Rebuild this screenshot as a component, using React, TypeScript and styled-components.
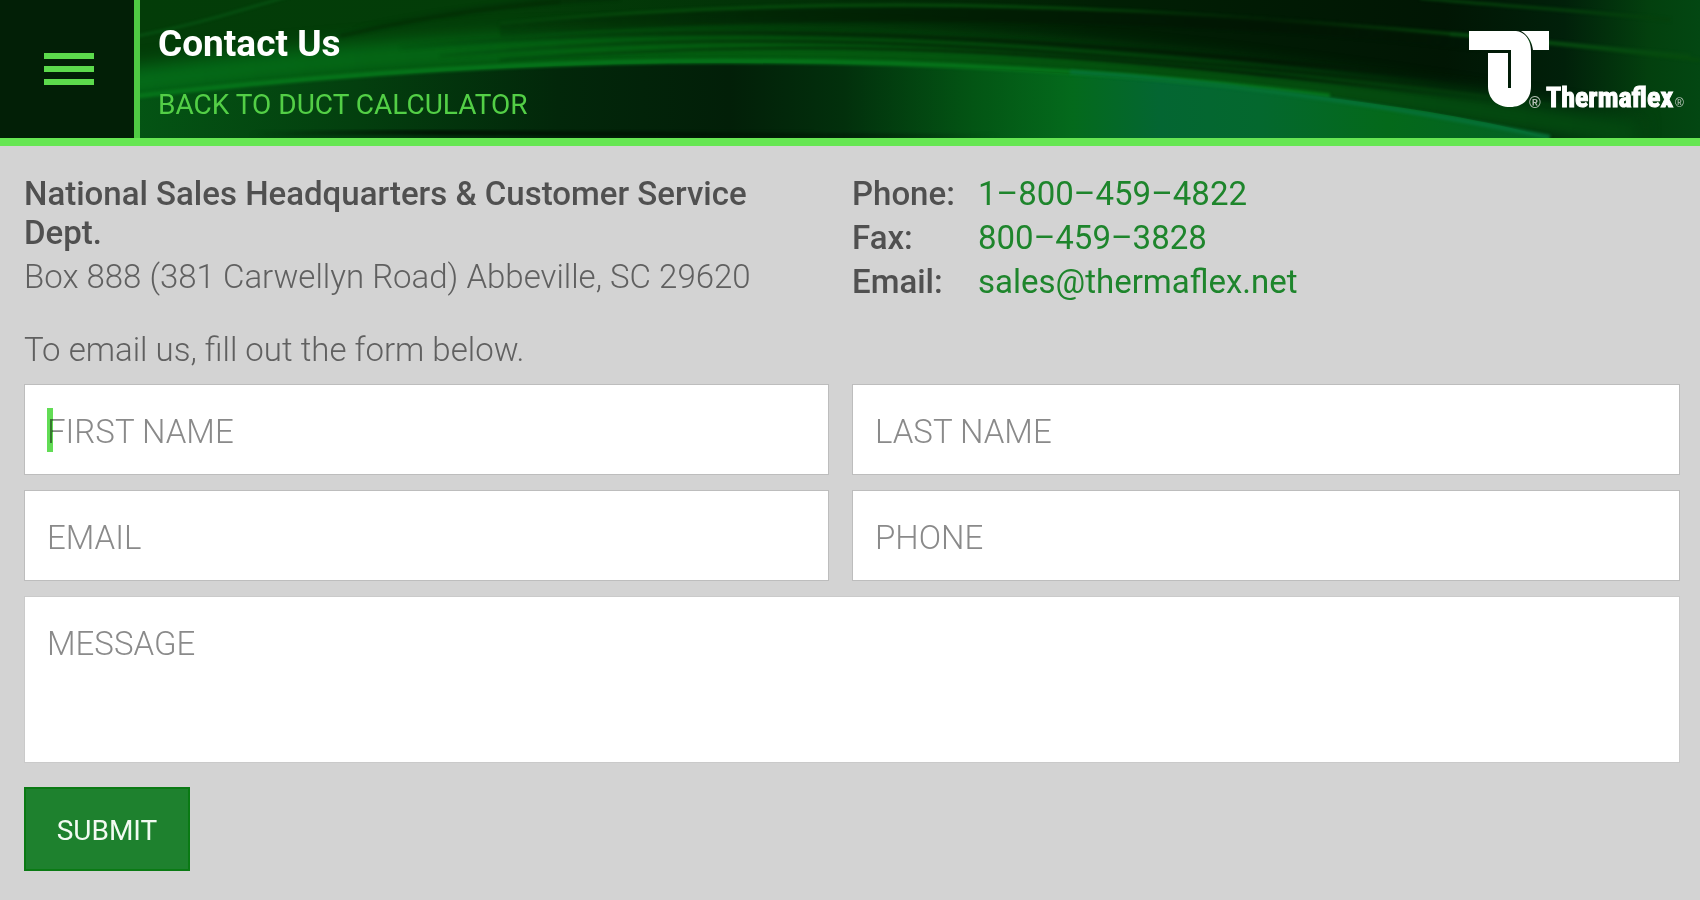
import React from 'react';
import styled, { createGlobalStyle } from 'styled-components';

const GlobalStyle = createGlobalStyle`
  * { box-sizing: border-box; }
  body {
    margin: 0;
    min-height: 100vh;
    background: #d3d3d3;
    color: #606060;
    font-family: Roboto, 'Liberation Sans', sans-serif;
    font-size: 33px;
    font-weight: 350;
    line-height: 39px;
  }
`;

const Header = styled.header`
  position: relative;
  display: flex;
  height: 146px;
  background: #022c08;
  border-bottom: 8px solid #66e652;
`;

const Backdrop = styled.svg`
  position: absolute;
  inset: 0;
  width: 100%;
  height: 100%;
`;

const MenuButton = styled.button`
  position: relative;
  width: 140px;
  padding: 0 0 0 44px;
  display: flex;
  flex-direction: column;
  justify-content: center;
  gap: 7px;
  background: #021f06;
  border: 0;
  border-right: 6px solid #4fcb43;
`;

const MenuBar = styled.span`
  width: 50px;
  height: 6px;
  background: #5cdb4c;
`;

const Heading = styled.div`
  position: relative;
  flex: 1;
  padding: 24px 0 0 18px;
`;

const Title = styled.h1`
  margin: 0 0 22px;
  color: #fff;
  font-size: 37px;
  font-weight: 700;
  line-height: 40px;
`;

const BackLink = styled.a`
  display: block;
  color: #53cf46;
  font-size: 28px;
  font-weight: 400;
  line-height: 38px;
  text-decoration: none;
`;

const Logo = styled.svg`
  position: relative;
  width: 220px;
  height: 84px;
  margin: 28px 12px 0 0;
  overflow: visible;
`;

const Main = styled.main`
  padding: 28px 20px 0 24px;
`;

const Columns = styled.div`
  display: grid;
  grid-template-columns: 1fr 1fr;
  row-gap: 15px;
`;

const Cell = styled.div<{ $left?: boolean }>`
  position: relative;
  padding-right: ${(p) => (p.$left ? '23px' : '0')};
`;

const Office = styled.h2`
  margin: 0 0 5px;
  padding-right: 24px;
  font-size: 33px;
  font-weight: 500;
  color: #505050;
`;

const Text = styled.p`
  margin: 0;
`;

const Intro = styled.p`
  margin: 0 0 15px;
  padding-top: 29px;
`;

const Contacts = styled.dl`
  margin: 0;
  display: grid;
  grid-template-columns: 126px 1fr;
  align-content: start;
  row-gap: 5px;
`;

const Term = styled.dt`
  font-weight: 500;
  color: #505050;
`;

const Value = styled.dd`
  margin: 0;
`;

const ContactLink = styled.a`
  color: #1e852c;
  font-weight: 400;
  text-decoration: none;
`;

const Input = styled.input`
  display: block;
  width: 100%;
  height: 91px;
  padding: 4px 22px 0;
  border: 1px solid #bdbdbd;
  border-radius: 0;
  background: #fff;
  font: inherit;
  font-weight: 300;
  color: #555;
  outline: 0;
  &::placeholder { color: #8a8a8a; opacity: 1; }
`;

const Message = styled.textarea`
  display: block;
  width: 100%;
  height: 167px;
  margin: 15px 0 24px;
  padding: 27px 22px;
  border: 1px solid #cacaca;
  border-radius: 0;
  background: #fff;
  font: inherit;
  font-weight: 300;
  color: #555;
  outline: 0;
  resize: none;
  &::placeholder { color: #8a8a8a; opacity: 1; }
`;

const Caret = styled.span`
  position: absolute;
  left: 23px;
  top: 24px;
  width: 6px;
  height: 44px;
  background: #62dc55;
  mix-blend-mode: multiply;
  pointer-events: none;
`;

const Submit = styled.button`
  display: block;
  width: 166px;
  height: 84px;
  padding: 4px 0 0;
  border: 2px solid #0a7a14;
  background: #1e812e;
  color: #f2fbf2;
  font: 400 28px/34px Roboto, 'Liberation Sans', sans-serif;
`;

const fields = [
  { name: 'firstName', label: 'FIRST NAME', type: 'text' },
  { name: 'lastName', label: 'LAST NAME', type: 'text' },
  { name: 'email', label: 'EMAIL', type: 'email' },
  { name: 'phone', label: 'PHONE', type: 'tel' },
];

const contacts = [
  { term: 'Phone:', value: '1–800–459–4822', href: 'tel:18004594822' },
  { term: 'Fax:', value: '800–459–3828', href: 'tel:8004593828' },
  { term: 'Email:', value: 'sales@thermaflex.net', href: 'mailto:sales@thermaflex.net' },
];

function Swirl() {
  return (
    <Backdrop viewBox="0 0 1700 138" preserveAspectRatio="none" aria-hidden="true">
      <defs>
        <linearGradient id="upper" x1="0" y1="0" x2="1" y2="0">
          <stop offset="0.08" stopColor="#033c08" />
          <stop offset="0.3" stopColor="#033d08" />
          <stop offset="0.45" stopColor="#023207" />
          <stop offset="0.65" stopColor="#011f04" />
          <stop offset="0.85" stopColor="#011604" />
          <stop offset="0.92" stopColor="#01200a" />
          <stop offset="0.97" stopColor="#03400e" />
          <stop offset="1" stopColor="#034712" />
        </linearGradient>
        <linearGradient id="lower" gradientUnits="userSpaceOnUse" x1="128" y1="0" x2="1560" y2="0">
          <stop offset="0" stopColor="#045514" />
          <stop offset="0.16" stopColor="#033f0e" />
          <stop offset="0.3" stopColor="#02270a" />
          <stop offset="0.42" stopColor="#021f08" />
          <stop offset="0.5" stopColor="#02300c" />
          <stop offset="0.59" stopColor="#035514" />
          <stop offset="0.66" stopColor="#046a1c" />
          <stop offset="0.72" stopColor="#046632" />
          <stop offset="0.79" stopColor="#04682e" />
          <stop offset="0.88" stopColor="#04691a" />
          <stop offset="1" stopColor="#046126" />
        </linearGradient>
        <linearGradient id="shade" gradientUnits="userSpaceOnUse" x1="350" y1="0" x2="1500" y2="0">
          <stop offset="0" stopColor="#011d03" stopOpacity="0" />
          <stop offset="0.4" stopColor="#011d03" stopOpacity="0.6" />
          <stop offset="0.8" stopColor="#011503" stopOpacity="0.8" />
          <stop offset="1" stopColor="#011503" stopOpacity="0" />
        </linearGradient>
        <linearGradient id="glow" gradientUnits="userSpaceOnUse" x1="128" y1="0" x2="1640" y2="0">
          <stop offset="0" stopColor="#046c19" />
          <stop offset="0.4" stopColor="#046010" />
          <stop offset="0.7" stopColor="#04520f" />
          <stop offset="1" stopColor="#034810" />
        </linearGradient>
        <linearGradient id="floor" gradientUnits="userSpaceOnUse" x1="250" y1="0" x2="1000" y2="0">
          <stop offset="0" stopColor="#001a04" stopOpacity="0" />
          <stop offset="0.25" stopColor="#001503" />
          <stop offset="0.6" stopColor="#001503" />
          <stop offset="1" stopColor="#001a04" stopOpacity="0" />
        </linearGradient>
        <filter id="soft" x="-10%" y="-80%" width="120%" height="260%" colorInterpolationFilters="sRGB">
          <feGaussianBlur stdDeviation="9" />
        </filter>
        <filter id="fine" x="-10%" y="-80%" width="120%" height="260%" colorInterpolationFilters="sRGB">
          <feGaussianBlur stdDeviation="1.5" />
        </filter>
      </defs>
      <rect width="1700" height="138" fill="url(#upper)" />
      <path d="M80 90 C300 60 500 44 730 48 S1130 52 1640 136" fill="none" stroke="url(#glow)" strokeWidth="32" filter="url(#soft)" />
      <g fill="none" filter="url(#fine)">
        <path d="M128 38 C200 24 240 10 290 -4" stroke="#09621a" strokeOpacity="0.7" strokeWidth="2" />
        <path d="M300 40 C400 20 480 4 620 -4" stroke="url(#shade)" strokeWidth="8" />
        <path d="M340 36 C400 22 480 8 560 2" stroke="#012c04" strokeOpacity="0.6" strokeWidth="4" />
        <path d="M500 24 C620 12 760 5 900 5 S1330 16 1700 60" stroke="#064b0c" strokeWidth="3" />
        <path d="M500 30 C800 6 1200 10 1480 44" stroke="url(#shade)" strokeWidth="14" />
        <path d="M400 48 C700 20 1000 30 1500 84" stroke="url(#shade)" strokeWidth="5" />
        <path d="M440 56 C750 28 1000 38 1520 96" stroke="url(#shade)" strokeWidth="4" />
        <path d="M700 40 C900 38 1100 44 1560 106" stroke="#04480b" strokeOpacity="0.5" strokeWidth="2" />
        <path d="M500 60 C850 34 1100 50 1560 110" stroke="url(#shade)" strokeWidth="3" />
        <path d="M1420 -2 C1500 6 1580 10 1670 20" stroke="#05400c" strokeWidth="3" />
        <path d="M1450 34 C1530 40 1600 48 1690 56" stroke="#064a10" strokeWidth="4" />
      </g>
      <path d="M128 99 C300 79 500 63 724 63 C960 63 1160 77 1330 98 C1430 110 1500 124 1550 138 H128 Z" fill="url(#lower)" />
      <path d="M128 97 C300 77 500 61 724 61 C960 61 1160 75 1330 96" fill="none" stroke="#06741a" strokeWidth="5" filter="url(#fine)" />
      <path d="M1070 72 C1200 80 1350 98 1550 137" fill="none" stroke="#067137" strokeWidth="4" filter="url(#fine)" />
      <path d="M200 136 C400 128 600 136 1000 136" fill="none" stroke="url(#floor)" strokeWidth="5" filter="url(#fine)" />
    </Backdrop>
  );
}

function ThermaflexLogo() {
  return (
    <Logo viewBox="0 0 220 84" role="img" aria-label="Thermaflex">
      <g fill="#fff">
        <path d="M1 3 H48 C58 4 63 13 63 23 V58 C63 72 54 79 42 79 C29 79 20 71 20 58 V25 H40 V60 H43 V22 H1 Z" />
        <path d="M53 3 H81 V22 H65 C64 14 60 7 53 3 Z" />
      </g>
      <text x="61" y="80" fontFamily="'Liberation Sans', sans-serif" fontWeight="700" fontSize="16" fill="#b4beb5">®</text>
      <text x="78" y="79" fontFamily="'Liberation Sans Narrow', 'Roboto Condensed', 'Liberation Sans', sans-serif" fontWeight="700" fontSize="28" fill="#fff" stroke="#fff" strokeWidth="1">Thermaflex</text>
      <text x="207" y="79" fontFamily="'Liberation Sans', sans-serif" fontSize="12" fill="#c4cec5">®</text>
    </Logo>
  );
}

export default function App() {
  return (
    <>
      <GlobalStyle />
      <Header>
        <Swirl />
        <MenuButton type="button" aria-label="Menu">
          <MenuBar />
          <MenuBar />
          <MenuBar />
        </MenuButton>
        <Heading>
          <Title>Contact Us</Title>
          <BackLink href="#calculator">BACK TO DUCT CALCULATOR</BackLink>
        </Heading>
        <ThermaflexLogo />
      </Header>
      <Main>
        <Columns>
          <Cell $left>
            <Office>National Sales Headquarters &amp; Customer Service Dept.</Office>
            <Text>Box 888 (381 Carwellyn Road) Abbeville, SC 29620</Text>
          </Cell>
          <Contacts>
            {contacts.map((c) => (
              <React.Fragment key={c.term}>
                <Term>{c.term}</Term>
                <Value>
                  <ContactLink href={c.href}>{c.value}</ContactLink>
                </Value>
              </React.Fragment>
            ))}
          </Contacts>
        </Columns>
        <Intro>To email us, fill out the form below.</Intro>
        <form>
          <Columns>
            {fields.map((f, i) => (
              <Cell key={f.name} $left={i % 2 === 0}>
                <Input name={f.name} type={f.type} placeholder={f.label} aria-label={f.label} />
                {i === 0 && <Caret />}
              </Cell>
            ))}
          </Columns>
          <Message name="message" placeholder="MESSAGE" aria-label="MESSAGE" />
          <Submit type="submit">SUBMIT</Submit>
        </form>
      </Main>
    </>
  );
}
